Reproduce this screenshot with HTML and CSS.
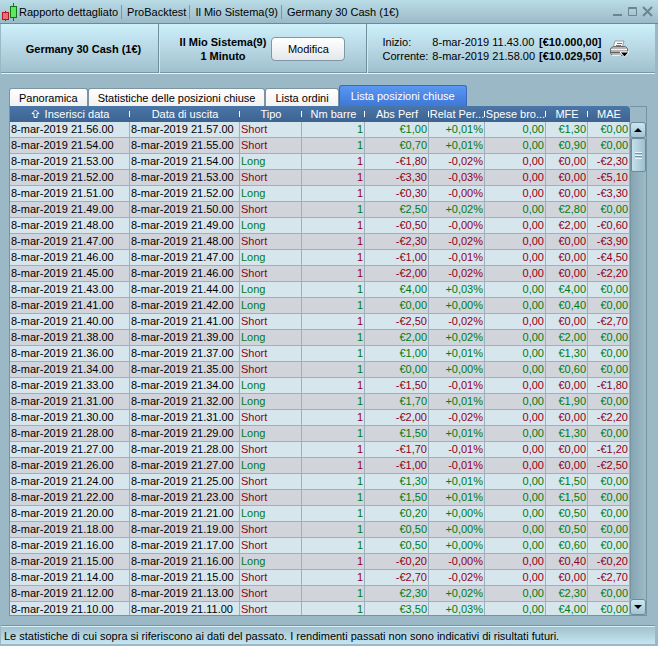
FILE: index.html
```html
<!DOCTYPE html>
<html lang="it">
<head>
  <meta charset="UTF-8" />
  <title>Rapporto dettagliato</title>
  <meta name="viewport" content="width=device-width, initial-scale=1" />
  <link rel="stylesheet" href="styles.css">
</head>
<body>

<!-- Barra del titolo -->
<header class="titlebar">
  <svg class="logo" width="17" height="18" viewBox="0 0 17 18">
    <path d="M4.500 8v10" stroke="#8d1420" />
    <rect x="1.500" y="9.500" width="6" height="7" fill="#f26a70" stroke="#a81c28" />
    <path d="M12.500 0v18" stroke="#0b7a14" />
    <rect x="9.500" y="3.500" width="6" height="11" fill="#5fe85f" stroke="#0b7a14" />
  </svg>
  <ul class="crumbs">
    <li>Rapporto dettagliato</li>
    <li>ProBacktest</li>
    <li>Il Mio Sistema(9)</li>
    <li>Germany 30 Cash (1€)</li>
  </ul>
  <div class="window-buttons">
    <button type="button" aria-label="Riduci">
      <svg width="11" height="11" viewBox="0 0 11 11"><path d="M1 9h9" stroke-width="2" /></svg>
    </button>
    <button type="button" aria-label="Ingrandisci">
      <svg width="11" height="11" viewBox="0 0 11 11"><path d="M1.500 1.500h8v8h-8zM1 2.500h9" /></svg>
    </button>
    <button type="button" aria-label="Chiudi">
      <svg width="11" height="11" viewBox="0 0 11 11"><path d="M1 1l9 9M10 1l-9 9" stroke-width="2" /></svg>
    </button>
  </div>
</header>

<!-- Riepilogo -->
<section class="summary">
  <div class="instrument">Germany 30 Cash (1€)</div>
  <div class="system">
    <div class="system-name">Il Mio Sistema(9)<br>1 Minuto</div>
    <button type="button" class="edit">Modifica</button>
  </div>
  <div class="period">
    <dl>
      <dt>Inizio:</dt><dd>8-mar-2019 11.43.00</dd><dd><b>[€10.000,00]</b></dd>
      <dt>Corrente:</dt><dd>8-mar-2019 21.58.00</dd><dd><b>[€10.029,50]</b></dd>
    </dl>
    <button type="button" class="print" aria-label="Stampa">
      <svg width="20" height="18" viewBox="0 0 20 18">
        <path d="M6 1h9l-2 7H4z" fill="#fff" stroke="#9a9a9a" />
        <path d="M8 3.500h5M7 5.500h5" stroke="#777" />
        <path d="M1.500 8.500l3-2h12l2 2v5l-2 2h-13l-2-2z" fill="#b4b4b4" stroke="#6c6c6c" />
        <path d="M2 9.500h16" stroke="#f2f2f2" />
        <path d="M2 12.500h11" stroke="#5e5e5e" />
        <path d="M3 15.500h9" stroke="#eee" />
        <path d="M11 12h9l-4.500 5z" fill="#000" stroke="#fff" />
      </svg>
    </button>
  </div>
</section>

<main class="report">
  <nav class="tabs">
    <button type="button" class="tab">Panoramica</button>
    <button type="button" class="tab">Statistiche delle posizioni chiuse</button>
    <button type="button" class="tab">Lista ordini</button>
    <button type="button" class="tab active">Lista posizioni chiuse</button>
  </nav>

  <!-- Posizioni chiuse -->
  <div class="grid">
    <div class="grid-body">
      <table class="positions">
        <colgroup>
          <col class="w-in"><col class="w-out"><col class="w-type"><col class="w-bars"><col class="w-perf"><col class="w-rel"><col class="w-fees"><col class="w-mfe"><col class="w-mae">
        </colgroup>
        <thead>
          <tr>
            <th>
              <svg class="sort" width="9" height="10" viewBox="0 0 9 10"><path d="M4.500 1L8 4.500H6v4H3v-4H1z" /></svg>
              Inserisci data
            </th>
            <th>Data di uscita</th>
            <th>Tipo</th>
            <th>Nm barre</th>
            <th>Abs Perf</th>
            <th>Relat Per...</th>
            <th>Spese bro...</th>
            <th>MFE</th>
            <th>MAE</th>
          </tr>
        </thead>
        <tbody id="rows"></tbody>
      </table>
    </div>
    <div class="scrollbar">
      <button type="button" class="arrow" aria-label="Su">
        <svg width="8" height="4" viewBox="0 0 8 4"><path d="M0 4l4-4 4 4z" /></svg>
      </button>
      <div class="track"><div class="thumb"></div></div>
      <button type="button" class="arrow" aria-label="Giù">
        <svg width="8" height="4" viewBox="0 0 8 4"><path d="M0 0l4 4 4-4z" /></svg>
      </button>
    </div>
  </div>
</main>

<footer>Le statistiche di cui sopra si riferiscono ai dati del passato. I rendimenti passati non sono indicativi di risultati futuri.</footer>

<script src="script.js"></script>
</body>
</html>
```
FILE: styles.css
```css
:root {
  --bg: #9ab8c5;
  --line: #7793a2;
  --green: #007a14;
  --red: #8f0019;
}
* {
  box-sizing: border-box;
}
body {
  margin: 0;
  height: 100vh;
  display: flex;
  flex-direction: column;
  background: var(--bg);
  color: #000;
  font-family: "Liberation Sans", Arial, sans-serif;
  font-size: 11px;
  line-height: 14px;
}
button {
  padding: 0;
  border: none;
  background: none;
  color: inherit;
  font: inherit;
}
svg {
  display: block;
  fill: none;
}

/* barra del titolo */
.titlebar {
  display: flex;
  align-items: center;
  height: 24px;
  padding: 0 5px 0 1px;
  background: linear-gradient(#b9dce7, #9bbac7);
  border-bottom: 1px solid #6c8a99;
}
.logo {
  margin-right: 1px;
}
.crumbs {
  display: flex;
  flex: 1;
  margin: 0;
  padding: 0;
  list-style: none;
}
.crumbs li + li {
  margin-left: 3px;
  padding-left: 5px;
  border-left: 1px solid #7896a5;
}
.window-buttons {
  display: flex;
  gap: 4px;
}
.window-buttons svg {
  stroke: #6c8490;
}

/* riepilogo */
.summary {
  display: grid;
  grid-template-columns: 157fr 208fr 289fr;
  height: 50px;
  margin: 0 3px 0 1px;
  background: linear-gradient(#cdf0fb, #a0bfcc);
  border-bottom: 1px solid #e3f4fa;
  box-shadow: inset 0 -1px #7896a5;
}
.summary > div {
  display: flex;
  align-items: center;
  justify-content: center;
}
.summary > div + div {
  border-left: 1px solid #6f8e9d;
  box-shadow: inset 1px 0 #cfeaf3;
}
.instrument,
.system-name {
  font-weight: bold;
  text-align: center;
}
.instrument {
  padding-left: 8px;
}
.system {
  gap: 5px;
}
.edit {
  width: 74px;
  height: 24px;
  border: 1px solid #8096a2;
  border-radius: 4px;
  background: linear-gradient(#fff, #e4e8ea);
}
.period {
  gap: 8px;
  padding-right: 10px;
}
dl {
  display: grid;
  grid-template-columns: repeat(3, auto);
  column-gap: 4px;
  margin: 0;
}
dd {
  margin: 0;
}

/* schede */
.report {
  flex: 1;
  min-height: 0;
  display: flex;
  flex-direction: column;
  padding: 11px 11px 0 9px;
}
.tabs {
  display: flex;
  align-items: flex-end;
}
.tab {
  height: 18px;
  padding: 0 9px;
  border: 1px solid #7d95a1;
  border-bottom: none;
  border-radius: 3px 3px 0 0;
  background: linear-gradient(#fff, #f1f1f1);
}
.tab.active {
  height: 21px;
  padding: 0 11px;
  border-color: #3a68bd;
  background: linear-gradient(#5a97f2, #3e78d8);
  color: #fff;
}

/* tabella */
.grid {
  flex: 1;
  min-height: 0;
  display: flex;
  border: 1px solid var(--line);
  border-top: none;
}
.grid-body {
  flex: 1;
  min-width: 0;
  overflow: hidden;
}
.positions {
  width: 100%;
  table-layout: fixed;
  border-collapse: separate;
  border-spacing: 0;
}
.w-in { width: 120px; }
.w-out { width: 110px; }
.w-type { width: 62px; }
.w-bars { width: 63px; }
.w-perf { width: 64px; }
.w-rel { width: 56px; }
.w-fees { width: 61px; }
.w-mfe { width: 42px; }
.w-mae { width: 42px; }
th {
  height: 16px;
  padding: 0;
  background: linear-gradient(#4a76a8, #3d6391);
  color: #fff;
  font-weight: normal;
  line-height: 16px;
  white-space: nowrap;
}
th:not(:last-child) {
  background:
    linear-gradient(#fff, #fff) right center / 1px 6px no-repeat,
    linear-gradient(#4a76a8, #3d6391);
}
th:last-child {
  border-top-right-radius: 4px;
}
.sort {
  display: inline-block;
  vertical-align: -1px;
  margin-right: 2px;
  stroke: #fff;
}
td {
  height: 16px;
  padding: 0 1px;
  border-right: 1px solid #9db0bb;
  border-bottom: 1px solid #9db0bb;
  background: #d7e6ed;
  line-height: 15px;
  white-space: nowrap;
}
tbody tr:nth-child(even) td {
  background: #d1d5db;
}
.num {
  text-align: right;
}
.up {
  color: var(--green);
}
.down {
  color: var(--red);
}

/* barra di scorrimento */
.scrollbar {
  width: 16px;
  display: flex;
  flex-direction: column;
  padding-top: 15px;
  border-top: 1px solid var(--line);
}
.arrow {
  display: flex;
  align-items: center;
  justify-content: center;
  height: 16px;
  border: 1px solid #6c8a99;
  border-radius: 3px;
  background: linear-gradient(#cbe6f0, #a4c5d3);
}
.arrow svg {
  fill: #000;
}
.track {
  flex: 1;
  border-left: 1px solid var(--line);
  background: linear-gradient(to right, #86a5b3, #9dbac6);
}
.thumb {
  display: flex;
  align-items: center;
  justify-content: center;
  height: 34px;
  border: 1px solid #6c8a99;
  border-radius: 2px;
  background: linear-gradient(to right, #c3e0eb, #9fc0ce);
}
.thumb::before {
  content: "";
  width: 7px;
  height: 7px;
  background: repeating-linear-gradient(#e8f7fc 0 1px, #7794a2 1px 2px, transparent 2px 3px);
}

footer {
  margin: 10px 3px 2px 1px;
  padding: 2px 3px 1px;
  border-top: 1px solid #d8eef6;
  box-shadow: 0 -1px #7896a5;
  background: linear-gradient(#a3c1ce, #c4e6f1);
}
```
FILE: script.js
```javascript
// entrata, uscita, tipo, perf, perf relativa, MFE, MAE
const positions = [
  ["21.56", "21.57", "Short", "€1,00", "+0,01%", "€1,30", "€0,00"],
  ["21.54", "21.55", "Short", "€0,70", "+0,01%", "€0,90", "€0,00"],
  ["21.53", "21.54", "Long", "-€1,80", "-0,02%", "€0,00", "-€2,30"],
  ["21.52", "21.53", "Short", "-€3,30", "-0,03%", "€0,00", "-€5,10"],
  ["21.51", "21.52", "Long", "-€0,30", "-0,00%", "€0,00", "-€3,30"],
  ["21.49", "21.50", "Short", "€2,50", "+0,02%", "€2,80", "€0,00"],
  ["21.48", "21.49", "Long", "-€0,50", "-0,00%", "€2,00", "-€0,60"],
  ["21.47", "21.48", "Short", "-€2,30", "-0,02%", "€0,00", "-€3,90"],
  ["21.46", "21.47", "Long", "-€1,00", "-0,01%", "€0,00", "-€4,50"],
  ["21.45", "21.46", "Short", "-€2,00", "-0,02%", "€0,00", "-€2,20"],
  ["21.43", "21.44", "Long", "€4,00", "+0,03%", "€4,00", "€0,00"],
  ["21.41", "21.42", "Long", "€0,00", "+0,00%", "€0,40", "€0,00"],
  ["21.40", "21.41", "Short", "-€2,50", "-0,02%", "€0,00", "-€2,70"],
  ["21.38", "21.39", "Long", "€2,00", "+0,02%", "€2,00", "€0,00"],
  ["21.36", "21.37", "Short", "€1,00", "+0,01%", "€1,30", "€0,00"],
  ["21.34", "21.35", "Short", "€0,00", "+0,00%", "€0,60", "€0,00"],
  ["21.33", "21.34", "Long", "-€1,50", "-0,01%", "€0,00", "-€1,80"],
  ["21.31", "21.32", "Long", "€1,70", "+0,01%", "€1,90", "€0,00"],
  ["21.30", "21.31", "Short", "-€2,00", "-0,02%", "€0,00", "-€2,20"],
  ["21.28", "21.29", "Long", "€1,50", "+0,01%", "€1,30", "€0,00"],
  ["21.27", "21.28", "Short", "-€1,70", "-0,01%", "€0,00", "-€1,20"],
  ["21.26", "21.27", "Long", "-€1,00", "-0,01%", "€0,00", "-€2,50"],
  ["21.24", "21.25", "Short", "€1,30", "+0,01%", "€1,50", "€0,00"],
  ["21.22", "21.23", "Short", "€1,50", "+0,01%", "€1,50", "€0,00"],
  ["21.20", "21.21", "Long", "€0,20", "+0,00%", "€0,50", "€0,00"],
  ["21.18", "21.19", "Short", "€0,50", "+0,00%", "€0,50", "€0,00"],
  ["21.16", "21.17", "Short", "€0,50", "+0,00%", "€0,60", "€0,00"],
  ["21.15", "21.16", "Long", "-€0,20", "-0,00%", "€0,40", "-€0,20"],
  ["21.14", "21.15", "Short", "-€2,70", "-0,02%", "€0,00", "-€2,70"],
  ["21.12", "21.13", "Short", "€2,30", "+0,02%", "€2,30", "€0,00"],
  ["21.10", "21.11", "Short", "€3,50", "+0,03%", "€4,00", "€0,00"]
];

document.getElementById("rows").innerHTML = positions.map(function(p) {
  const [entrata, uscita, tipo, perf, relat, mfe, mae] = p;
  const segno = perf.startsWith("-") ? "down" : "up";
  const numeri = ["1", perf, relat, "0,00", mfe, mae];
  return `<tr>
    <td>8-mar-2019 ${entrata}.00</td>
    <td>8-mar-2019 ${uscita}.00</td>
    <td class="${tipo === "Long" ? "up" : "down"}">${tipo}</td>
    ${numeri.map(n => `<td class="num ${segno}">${n}</td>`).join("")}
  </tr>`;
}).join("");
```
